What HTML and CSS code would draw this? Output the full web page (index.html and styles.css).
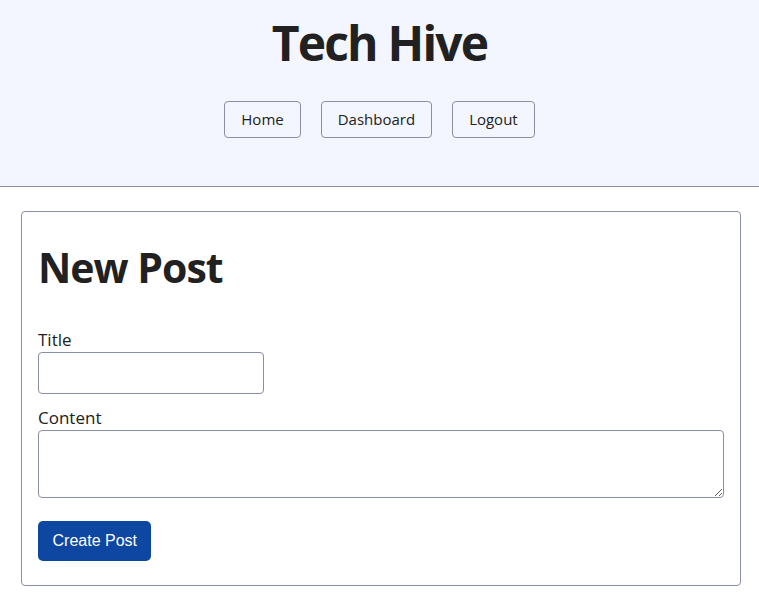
FILE: index.html
```html
<!DOCTYPE html>
<html lang="en">
<head>
<meta charset="utf-8">
<title>Tech Hive</title>
<link rel="stylesheet" href="styles.css">
</head>
<body>
<header class="site-header">
  <h1 class="brand">Tech Hive</h1>
  <nav class="nav">
    <a class="nav-btn" href="#">Home</a>
    <a class="nav-btn" href="#">Dashboard</a>
    <a class="nav-btn" href="#">Logout</a>
  </nav>
</header>
<main class="main">
  <section class="card">
    <h2 class="card-title">New Post</h2>
    <form class="post-form">
      <label class="field-label" for="title">Title</label>
      <input class="title-input" id="title" type="text">
      <label class="field-label" for="content">Content</label>
      <textarea class="content-input" id="content"></textarea>
      <button class="submit-btn" type="button">Create Post</button>
    </form>
  </section>
</main>
</body>
</html>
```
FILE: styles.css
```css
* { box-sizing: border-box; }
html, body { margin: 0; padding: 0; background: #ffffff; }
body {
  font-family: "Open Sans", "Noto Sans", sans-serif;
  color: #212121;
}
.site-header {
  background: #f3f6fe;
  border-bottom: 1px solid #8a8ea6;
  padding: 11px 0 48px;
  display: flex;
  flex-direction: column;
  align-items: center;
}
.brand {
  margin: 0;
  font-size: 48px;
  line-height: 64px;
  font-weight: 700;
  letter-spacing: -1.8px;
}
.nav {
  display: flex;
  gap: 20px;
  margin-top: 26px;
}
.nav-btn {
  display: block;
  height: 37px;
  line-height: 35px;
  padding: 0 16px;
  border: 1px solid #8a8ea6;
  border-radius: 4px;
  color: #212121;
  text-decoration: none;
  font-size: 15px;
}
.main {
  padding: 24px 18px 16px 21px;
}
.card {
  border: 1px solid #8a8ea6;
  border-radius: 4px;
  padding: 16px 16px 24px;
}
.card-title {
  margin: 11px 0 33px;
  font-size: 41px;
  line-height: 56px;
  font-weight: 700;
  letter-spacing: -1px;
}
.post-form {
  display: flex;
  flex-direction: column;
  align-items: flex-start;
}
.field-label {
  font-size: 17px;
  line-height: 23px;
}
.title-input {
  width: 226px;
  height: 42px;
  margin: 1px 0 12px;
  border: 1px solid #8a8ea6;
  border-radius: 4px;
  background: #fff;
  font: inherit;
}
.content-input {
  width: 100%;
  height: 68px;
  margin: 1px 0 0;
  border: 1px solid #8a8ea6;
  border-radius: 4px;
  background: #fff;
  font: inherit;
  resize: vertical;
}
.submit-btn {
  margin-top: 23px;
  height: 40px;
  padding: 0 14.5px;
  border: none;
  border-radius: 5px;
  background: #0d47a1;
  color: #ffffff;
  font-family: "Liberation Sans", Arial, sans-serif;
  font-size: 16px;
}
```
